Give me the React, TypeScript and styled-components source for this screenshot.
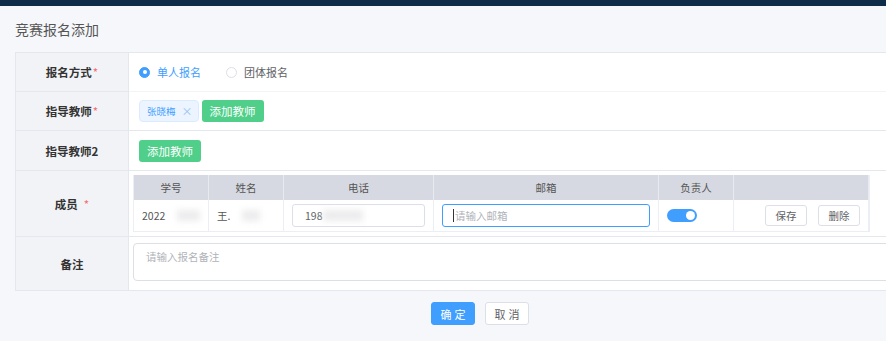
import React from "react";
import styled, { createGlobalStyle, css } from "styled-components";

const GlobalStyle = createGlobalStyle`
  html, body {
    margin: 0;
    padding: 0;
    background: #f5f7fa;
    overflow: hidden;
    font-family: "Noto Sans CJK SC", "Noto Sans", sans-serif;
  }
`;

const TopBar = styled.div`
  height: 6px;
  background: #0e2c4a;
`;

const Page = styled.div`
  padding: 0 0 0 15px;
  width: 900px;
`;

const Title = styled.h1`
  margin: 0;
  height: 46px;
  line-height: 46px;
  font-size: 14px;
  font-weight: 400;
  color: #555;
`;

const FormTable = styled.div`
  display: grid;
  grid-template-columns: 113px 1fr;
  border: 1px solid #e4e7ed;
  border-right: none;
  background: #fff;
`;

const Label = styled.div<{ $h: number; $last?: boolean }>`
  height: ${(p) => p.$h}px;
  display: flex;
  align-items: center;
  justify-content: center;
  background: #f2f3f7;
  border-right: 1px solid #e4e7ed;
  border-bottom: ${(p) => (p.$last ? "none" : "1px solid #e4e7ed")};
  font-size: 11.5px;
  font-weight: 700;
  color: #333;
  box-sizing: border-box;
`;

const Star = styled.span<{ $gap?: boolean }>`
  color: #f56c6c;
  margin-left: ${(p) => (p.$gap ? "6px" : "1px")};
  font-weight: 400;
`;

const Cell = styled.div<{ $h: number; $last?: boolean; $faint?: boolean }>`
  height: ${(p) => p.$h}px;
  display: flex;
  align-items: center;
  padding-left: 10px;
  gap: 3px;
  border-bottom: ${(p) =>
    p.$last ? "none" : p.$faint ? "1px solid #f3f4f6" : "1px solid #e4e7ed"};
  box-sizing: border-box;
`;

const RadioItem = styled.label<{ $checked?: boolean }>`
  display: flex;
  align-items: center;
  font-size: 11px;
  color: ${(p) => (p.$checked ? "#409eff" : "#606266")};
  margin-right: 22px;
`;

const RadioDot = styled.span<{ $checked?: boolean }>`
  width: 11px;
  height: 11px;
  border-radius: 50%;
  margin-right: 7px;
  box-sizing: border-box;
  ${(p) =>
    p.$checked
      ? css`
          background: #409eff;
          border: 1px solid #409eff;
          display: flex;
          align-items: center;
          justify-content: center;
          &::after {
            content: "";
            width: 4px;
            height: 4px;
            border-radius: 50%;
            background: #fff;
          }
        `
      : css`
          border: 1px solid #dcdfe6;
          background: #fff;
        `}
`;

const Tag = styled.span`
  display: inline-flex;
  align-items: center;
  height: 22px;
  padding: 0 5px 0 7px;
  box-sizing: border-box;
  background: #ecf5ff;
  border: 1px solid #d9ecff;
  border-radius: 4px;
  color: #409eff;
  font-size: 9.5px;
`;

const TagClose = styled.span`
  margin-left: 6px;
  color: #8fbff5;
  font-size: 11px;
`;

const GreenButton = styled.button`
  height: 22px;
  padding: 0 8px;
  border: none;
  border-radius: 3px;
  background: #4fcf89;
  color: #fff;
  font-size: 11.5px;
  font-family: inherit;
`;

const MemberTable = styled.div`
  display: grid;
  grid-template-columns: 75px 75px 150px 225px 75px 135px;
  width: 735px;
  border: 1px solid #ebeef5;
  border-top: none;
  margin-left: -6px;
`;

const Th = styled.div`
  height: 25px;
  background: #d6d9e1;
  border-right: 1px solid #e8eaef;
  display: flex;
  align-items: center;
  justify-content: center;
  font-size: 10.5px;
  color: #555;
  box-sizing: border-box;
`;

const Td = styled.div<{ $end?: boolean }>`
  height: 31px;
  border-right: 1px solid #ebeef5;
  display: flex;
  align-items: center;
  justify-content: ${(p) => (p.$end ? "flex-end" : "flex-start")};
  padding: 0 8px;
  gap: 11px;
  font-size: 10.5px;
  color: #555;
  box-sizing: border-box;
`;

const Blur = styled.span<{ $w: number }>`
  display: inline-block;
  width: ${(p) => p.$w}px;
  height: 11px;
  background: #ececee;
  filter: blur(3px);
  margin-left: 1px;
`;

const Input = styled.div<{ $focus?: boolean }>`
  width: 100%;
  height: 23px;
  box-sizing: border-box;
  border: 1px solid ${(p) => (p.$focus ? "#409eff" : "#dcdfe6")};
  border-radius: 3px;
  display: flex;
  align-items: center;
  padding-left: 12px;
  font-size: 10.5px;
  color: #606266;
`;

const Caret = styled.span`
  width: 1px;
  height: 13px;
  background: #333;
  margin-left: -2px;
  margin-right: 1px;
`;

const Placeholder = styled.span`
  color: #b0b3b9;
`;

const Switch = styled.span`
  width: 30px;
  height: 13px;
  border-radius: 7px;
  background: #409eff;
  display: flex;
  align-items: center;
  justify-content: flex-end;
  padding: 0 2px;
  box-sizing: border-box;
  &::after {
    content: "";
    width: 9px;
    height: 9px;
    border-radius: 50%;
    background: #fff;
  }
`;

const SmallButton = styled.button`
  height: 21px;
  width: 42px;
  border: 1px solid #dcdfe6;
  border-radius: 3px;
  background: #fff;
  color: #606266;
  font-size: 10.5px;
  font-family: inherit;
  padding: 0;
`;

const TextArea = styled.div`
  height: 38px;
  width: 780px;
  margin: 6px 0 0 -6px;
  border: 1px solid #dcdfe6;
  border-radius: 4px;
  box-sizing: border-box;
  padding: 5px 12px;
  font-size: 10.5px;
  color: #b0b3b9;
  align-self: flex-start;
`;

const Footer = styled.div`
  display: flex;
  justify-content: flex-start;
  gap: 10px;
  padding: 11px 0 0 416px;
`;

const FooterButton = styled.button<{ $primary?: boolean }>`
  width: 44px;
  height: 23px;
  border-radius: 3px;
  font-size: 11px;
  letter-spacing: 3px;
  text-indent: 3px;
  font-family: inherit;
  padding: 0;
  ${(p) =>
    p.$primary
      ? css`
          background: #409eff;
          border: 1px solid #409eff;
          color: #fff;
        `
      : css`
          background: #fff;
          border: 1px solid #dcdfe6;
          color: #606266;
        `}
`;

const MemberCell = styled(Cell)`
  align-items: flex-start;
  padding-top: 4px;
`;

export default function App() {
  return (
    <>
      <GlobalStyle />
      <TopBar />
      <Page>
        <Title>竞赛报名添加</Title>
        <FormTable>
          <Label $h={39}>
            报名方式<Star>*</Star>
          </Label>
          <Cell $h={39} $faint>
            <RadioItem $checked>
              <RadioDot $checked />
              单人报名
            </RadioItem>
            <RadioItem>
              <RadioDot />
              团体报名
            </RadioItem>
          </Cell>

          <Label $h={39}>
            指导教师<Star>*</Star>
          </Label>
          <Cell $h={39}>
            <Tag>
              张晓梅<TagClose>×</TagClose>
            </Tag>
            <GreenButton>添加教师</GreenButton>
          </Cell>

          <Label $h={40}>指导教师2</Label>
          <Cell $h={40}>
            <GreenButton>添加教师</GreenButton>
          </Cell>

          <Label $h={66}>
            成员<Star $gap>*</Star>
          </Label>
          <MemberCell $h={66}>
            <MemberTable>
              <Th>学号</Th>
              <Th>姓名</Th>
              <Th>电话</Th>
              <Th>邮箱</Th>
              <Th>负责人</Th>
              <Th />
              <Td>
                2022<Blur $w={30} />
              </Td>
              <Td>
                王.<Blur $w={18} />
              </Td>
              <Td>
                <Input>
                  198<Blur $w={40} />
                </Input>
              </Td>
              <Td>
                <Input $focus>
                  <Caret />
                  <Placeholder>请输入邮箱</Placeholder>
                </Input>
              </Td>
              <Td>
                <Switch />
              </Td>
              <Td $end>
                <SmallButton>保存</SmallButton>
                <SmallButton>删除</SmallButton>
              </Td>
            </MemberTable>
          </MemberCell>

          <Label $h={53} $last>
            备注
          </Label>
          <Cell $h={53} $last>
            <TextArea>请输入报名备注</TextArea>
          </Cell>
        </FormTable>
        <Footer>
          <FooterButton $primary>确定</FooterButton>
          <FooterButton>取消</FooterButton>
        </Footer>
      </Page>
    </>
  );
}
